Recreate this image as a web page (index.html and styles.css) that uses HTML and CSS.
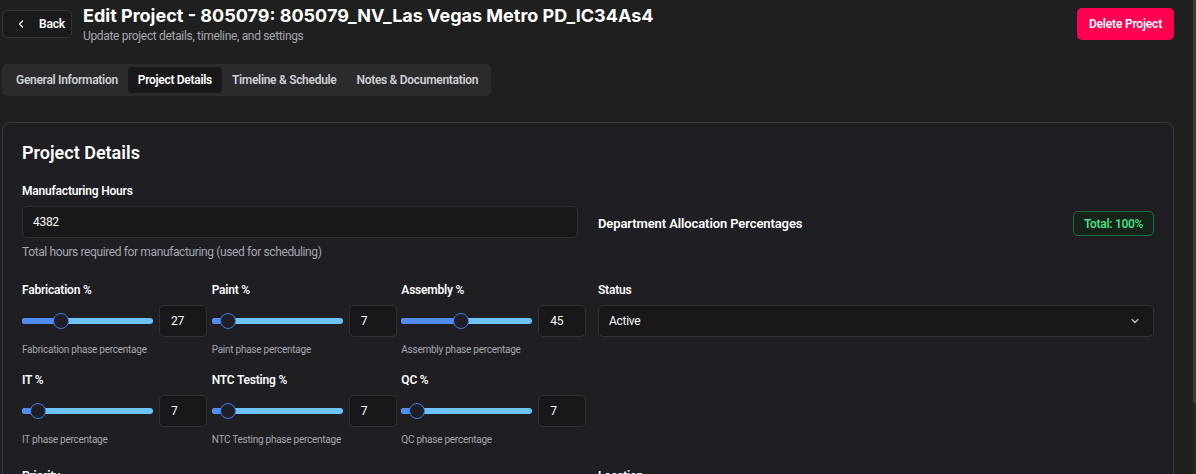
FILE: index.html
```html
<!DOCTYPE html>
<html lang="en">
<head>
<meta charset="utf-8">
<title>Edit Project</title>
<link rel="stylesheet" href="styles.css">
</head>
<body>
<div class="page">
  <header class="header">
    <div class="header-left">
      <button class="back-btn" type="button">
        <svg class="back-icon" viewBox="0 0 24 24" width="12" height="12" fill="none" stroke="currentColor" stroke-width="2.4" stroke-linecap="round" stroke-linejoin="round"><path d="m15 18-6-6 6-6"/></svg>
        <span>Back</span>
      </button>
      <div class="title-block">
        <h1 class="title">Edit Project - 805079: 805079_NV_Las Vegas Metro PD_IC34As4</h1>
        <p class="subtitle">Update project details, timeline, and settings</p>
      </div>
    </div>
    <button class="delete-btn" type="button">Delete Project</button>
  </header>

  <nav class="tabs">
    <span class="tab">General Information</span>
    <span class="tab active">Project Details</span>
    <span class="tab">Timeline &amp; Schedule</span>
    <span class="tab">Notes &amp; Documentation</span>
  </nav>

  <section class="card">
    <h2 class="card-title">Project Details</h2>

    <div class="grid-2">
      <div class="field">
        <label class="label">Manufacturing Hours</label>
        <div class="input wide">4382</div>
        <p class="help">Total hours required for manufacturing (used for scheduling)</p>
      </div>
      <div class="alloc-head">
        <span class="alloc-title">Department Allocation Percentages</span>
        <span class="badge">Total: 100%</span>
      </div>
    </div>

    <div class="grid-2 section">
      <div class="sliders">
        <div class="slider-cell">
          <label class="label">Fabrication %</label>
          <div class="slider-row">
            <div class="track"><div class="fill" style="width:39px"></div><div class="thumb" style="left:39px"></div></div>
            <div class="input num">27</div>
          </div>
          <p class="help small">Fabrication phase percentage</p>
        </div>
        <div class="slider-cell">
          <label class="label">Paint %</label>
          <div class="slider-row">
            <div class="track"><div class="fill" style="width:16px"></div><div class="thumb" style="left:16px"></div></div>
            <div class="input num">7</div>
          </div>
          <p class="help small">Paint phase percentage</p>
        </div>
        <div class="slider-cell">
          <label class="label">Assembly %</label>
          <div class="slider-row">
            <div class="track"><div class="fill" style="width:60px"></div><div class="thumb" style="left:60px"></div></div>
            <div class="input num">45</div>
          </div>
          <p class="help small">Assembly phase percentage</p>
        </div>
        <div class="slider-cell">
          <label class="label">IT %</label>
          <div class="slider-row">
            <div class="track"><div class="fill" style="width:16px"></div><div class="thumb" style="left:16px"></div></div>
            <div class="input num">7</div>
          </div>
          <p class="help small">IT phase percentage</p>
        </div>
        <div class="slider-cell">
          <label class="label">NTC Testing %</label>
          <div class="slider-row">
            <div class="track"><div class="fill" style="width:16px"></div><div class="thumb" style="left:16px"></div></div>
            <div class="input num">7</div>
          </div>
          <p class="help small">NTC Testing phase percentage</p>
        </div>
        <div class="slider-cell">
          <label class="label">QC %</label>
          <div class="slider-row">
            <div class="track"><div class="fill" style="width:16px"></div><div class="thumb" style="left:16px"></div></div>
            <div class="input num">7</div>
          </div>
          <p class="help small">QC phase percentage</p>
        </div>
      </div>
      <div class="field">
        <label class="label">Status</label>
        <div class="input select">
          <span>Active</span>
          <svg viewBox="0 0 24 24" width="12" height="12" fill="none" stroke="currentColor" stroke-width="2.4" stroke-linecap="round" stroke-linejoin="round"><path d="m6 9 6 6 6-6"/></svg>
        </div>
      </div>
    </div>

    <div class="grid-2 section-tail">
      <div class="field">
        <label class="label">Priority</label>
        <div class="input select"><span>Medium</span></div>
      </div>
      <div class="field">
        <label class="label">Location</label>
        <div class="input select"><span>Columbia Falls</span></div>
      </div>
    </div>
  </section>
</div>
<div class="scrollbar"><div class="scroll-thumb"></div></div>
</body>
</html>
```
FILE: styles.css
```css
* { box-sizing: border-box; }
html, body { margin: 0; padding: 0; }
body {
  background: #1f1f1f;
  color: #fafafa;
  font-family: Roboto, "Liberation Sans", Arial, sans-serif;
  font-size: 12px;
  overflow: hidden;
  height: 474px;
}
p, h1, h2 { margin: 0; }

.page { width: 1172px; margin-left: 2px; }

/* header */
.header {
  display: flex;
  justify-content: space-between;
  align-items: flex-start;
  padding-top: 4px;
}
.header-left { display: flex; align-items: flex-start; }
.back-btn {
  margin-top: 6px;
  width: 70px;
  height: 28px;
  display: flex;
  align-items: center;
  gap: 12px;
  padding: 0 0 0 12px;
  background: #1a1a1c;
  border: 1px solid #343438;
  border-radius: 5px;
  color: #fafafa;
  font: 600 12px/16px Roboto, sans-serif;
  letter-spacing: -0.2px;
}
.back-icon { flex: none; }
.title-block { margin-left: 11px; }
.title {
  font: 700 18px/24px Inter, Roboto, sans-serif;
  color: #ffffff;
  white-space: nowrap;
}
.subtitle {
  font: 400 12px/16px Roboto, sans-serif;
  letter-spacing: -0.33px;
  color: #a6a6ad;
}
.delete-btn {
  margin-top: 4px;
  width: 97px;
  height: 32px;
  border: none;
  border-radius: 5px;
  background: #ff0052;
  color: #ffffff;
  font: 600 12px/16px Roboto, sans-serif;
  letter-spacing: -0.2px;
}

/* tabs */
.tabs {
  margin-top: 20px;
  display: inline-flex;
  padding: 3px 3px 3px 4px;
  height: 32px;
  background: #2b2b2e;
  border-radius: 5px;
}
.tab {
  display: flex;
  align-items: center;
  height: 26px;
  padding: 0 10px;
  border-radius: 4px;
  color: #cfcfd4;
  font: 600 12px/16px Roboto, sans-serif;
  letter-spacing: -0.3px;
}
.tab.active { background: #18181b; color: #ffffff; }

/* card */
.card {
  margin-top: 26px;
  background: #1e1e23;
  border: 1px solid #38383e;
  border-radius: 8px;
  padding: 18px 19px 40px;
}
.card-title {
  font: 600 18px/24px Roboto, sans-serif;
  color: #ffffff;
  margin-bottom: 18px;
}
.grid-2 {
  display: grid;
  grid-template-columns: minmax(0, 1fr) minmax(0, 1fr);
  column-gap: 20px;
}
.section { margin-top: 22px; }
.section-tail { margin-top: 21px; }

.label {
  display: block;
  font: 600 12px/16px Roboto, sans-serif;
  letter-spacing: -0.2px;
  color: #fafafa;
  margin-bottom: 7px;
}
.input {
  height: 32px;
  background: #18181b;
  border: 1px solid #2f2f35;
  border-radius: 5px;
  display: flex;
  align-items: center;
  padding: 0 10px;
  font: 400 12px/16px Roboto, sans-serif;
  letter-spacing: -0.3px;
  color: #fafafa;
}
.help {
  margin-top: 6px;
  font: 400 12px/16px Roboto, sans-serif;
  letter-spacing: -0.38px;
  color: #a6a6ad;
}
.help.small { font-size: 10px; line-height: 14px; letter-spacing: -0.25px; }

.alloc-head {
  align-self: center;
  margin-top: 4px;
  display: flex;
  align-items: center;
  justify-content: space-between;
}
.alloc-title {
  font: 600 13px/18px Roboto, sans-serif;
  letter-spacing: -0.1px;
  color: #ffffff;
}
.badge {
  height: 25px;
  width: 81px;
  display: flex;
  align-items: center;
  justify-content: center;
  border: 1px solid #1d6b3a;
  background: #15231b;
  border-radius: 5px;
  color: #4ade80;
  font: 600 12px/16px Roboto, sans-serif;
  letter-spacing: -0.3px;
}

/* sliders */
.sliders {
  display: grid;
  grid-template-columns: repeat(3, minmax(0, 1fr));
  column-gap: 13px;
  row-gap: 15px;
}
.slider-row {
  display: flex;
  align-items: center;
  gap: 6px;
  height: 32px;
}
.track {
  position: relative;
  flex: none;
  width: 131px;
  height: 6px;
  border-radius: 3px;
  background: #6bc3f6;
}
.fill {
  height: 6px;
  border-radius: 3px 0 0 3px;
  background: #4f8bf0;
}
.thumb {
  position: absolute;
  top: -5px;
  width: 16px;
  height: 16px;
  margin-left: -8px;
  border-radius: 50%;
  background: #1e1e24;
  border: 1.5px solid #3d7fe8;
}
.input.num { flex: none; width: 48px; padding-left: 11px; }

.select { justify-content: space-between; color: #fafafa; }
.select svg { color: #c4c4c8; margin-right: 2px; }

/* fake scrollbar */
.scrollbar {
  position: fixed;
  top: 0;
  right: 0;
  width: 3px;
  height: 474px;
  background: #262626;
}
.scroll-thumb { height: 403px; background: #3a3a3a; }
```
